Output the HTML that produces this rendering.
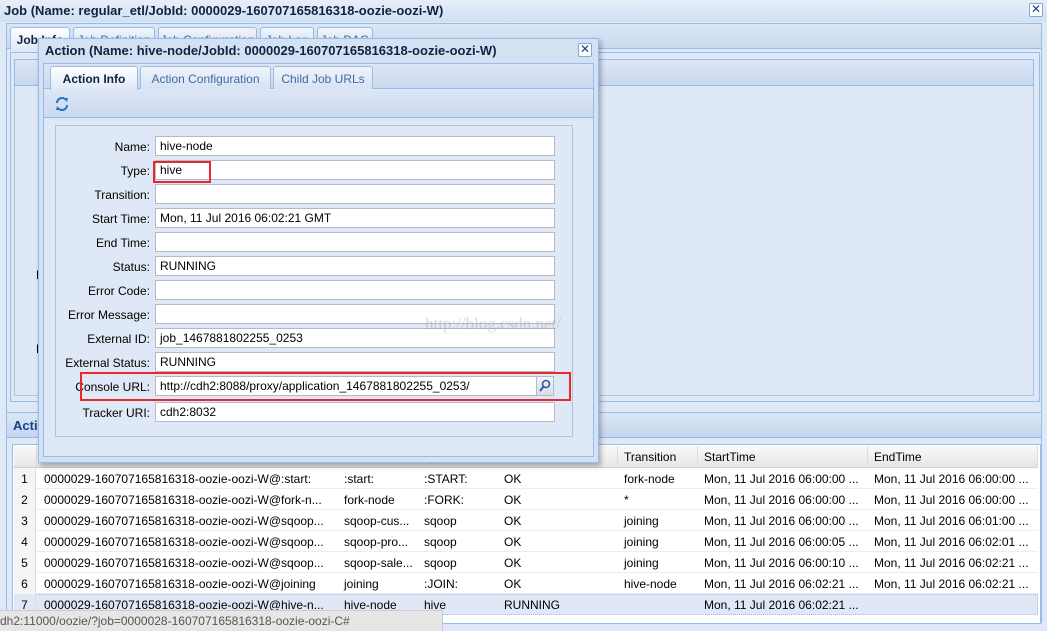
<!DOCTYPE html>
<html><head><meta charset="utf-8"><style>
*{box-sizing:border-box;margin:0;padding:0}
body{width:1047px;height:631px;overflow:hidden;background:#dfe8f6;font-family:"Liberation Sans",sans-serif;font-size:12px;position:relative;color:#000}
.abs{position:absolute}
.title{font-weight:bold;font-size:13px;color:#10223f}
.tab{position:absolute;border:1px solid #99bbe8;border-bottom:none;background:linear-gradient(#f0f4fb,#d6e2f3);color:#416aa3;font-size:12px;text-align:center;padding-top:5px;border-radius:3px 3px 0 0}
.tab.on{background:linear-gradient(#fff,#dfe8f6);color:#10223f;font-weight:bold}
.lbl{position:absolute;width:110px;text-align:right;left:40px;font-size:12px}
.inp{position:absolute;left:155px;width:400px;height:20px;background:#fff;border:1px solid #b5b8c8;padding:2px 4px;font-size:12px}
.row{position:absolute;left:14px;width:1024px;height:21px;border-bottom:1px solid #ededed;background:#fff}
.row span{position:absolute;top:4px;white-space:nowrap}
.rn{position:absolute;left:0;width:22px;height:21px;background:#f5f5f5;text-align:center;padding-top:4px;border-right:1px solid #ddd}
.hd{position:absolute;top:0;height:22px;border-right:1px solid #ddd;padding:4px 6px;color:#000}
</style></head><body>
<div class="abs" style="left:0;top:0;width:1047px;height:22px;background:linear-gradient(#e8eef9,#d2e0f3)"></div>
<div class="abs title" style="left:4px;top:3px">Job (Name: regular_etl/JobId: 0000029-160707165816318-oozie-oozi-W)</div>
<div class="abs" style="left:1029px;top:3px;width:14px;height:14px;border:1px solid #8aa6d2;border-radius:2px;background:#fff;color:#15428b;font-size:12px;line-height:11px;text-align:center">✕</div>
<div class="abs" style="left:6px;top:23px;width:1036px;height:600px;border:1px solid #99bbe8;background:#dfe8f6"></div>
<div class="abs" style="left:7px;top:24px;width:1034px;height:25px;background:linear-gradient(#dce6f5,#cbdaf0);border-bottom:1px solid #99bbe8"></div>
<div class="tab on" style="left:10px;top:27px;width:60px;height:23px">Job Info</div>
<div class="tab" style="left:73px;top:27px;width:82px;height:22px">Job Definition</div>
<div class="tab" style="left:158px;top:27px;width:99px;height:22px">Job Configuration</div>
<div class="tab" style="left:260px;top:27px;width:54px;height:22px">Job Log</div>
<div class="tab" style="left:317px;top:27px;width:56px;height:22px">Job DAG</div>
<div class="abs" style="left:10px;top:52px;width:1030px;height:350px;border:1px solid #99bbe8;background:#dfe8f6"></div>
<div class="abs" style="left:14px;top:59px;width:1020px;height:27px;border:1px solid #99bbe8;background:linear-gradient(#dce6f5,#c9d8ee)"></div>
<div class="abs" style="left:14px;top:86px;width:1020px;height:310px;border:1px solid #b5c3d8;border-top:none"></div>
<div class="abs" style="left:36px;top:268px;color:#000">P</div>
<div class="abs" style="left:36px;top:342px;color:#000">L</div>
<div class="abs" style="left:7px;top:412px;width:1034px;height:26px;background:linear-gradient(#dce6f5,#c5d6ee);border-top:1px solid #99bbe8;border-bottom:1px solid #99bbe8"></div>
<div class="abs title" style="left:13px;top:418px;font-size:13px;color:#15428b">Actions</div>
<div class="abs" style="left:12px;top:444px;width:1029px;height:180px;background:#fff;border:1px solid #99bbe8"></div>
<div class="abs" style="left:14px;top:446px;width:1024px;height:22px;background:linear-gradient(#f9f9f9,#e6e6e6);border-bottom:1px solid #d0d0d0;color:#000">
<div class="hd" style="left:0;width:23px"></div>
<div class="hd" style="left:24px;width:300px;color:#999">Action Id</div>
<div class="hd" style="left:324px;width:80px;color:#999">Name</div>
<div class="hd" style="left:404px;width:80px;color:#999">Type</div>
<div class="hd" style="left:484px;width:120px;color:#999">Status</div>
<div class="hd" style="left:604px;width:80px">Transition</div>
<div class="hd" style="left:684px;width:170px">StartTime</div>
<div class="hd" style="left:854px;width:170px">EndTime</div>
</div>
<div class="row" style="top:468px"><div class="rn">1</div><span style="left:30px">0000029-160707165816318-oozie-oozi-W@:start:</span><span style="left:330px">:start:</span><span style="left:410px">:START:</span><span style="left:490px">OK</span><span style="left:610px">fork-node</span><span style="left:690px">Mon, 11 Jul 2016 06:00:00 ...</span><span style="left:860px">Mon, 11 Jul 2016 06:00:00 ...</span></div>
<div class="row" style="top:489px"><div class="rn">2</div><span style="left:30px">0000029-160707165816318-oozie-oozi-W@fork-n...</span><span style="left:330px">fork-node</span><span style="left:410px">:FORK:</span><span style="left:490px">OK</span><span style="left:610px">*</span><span style="left:690px">Mon, 11 Jul 2016 06:00:00 ...</span><span style="left:860px">Mon, 11 Jul 2016 06:00:00 ...</span></div>
<div class="row" style="top:510px"><div class="rn">3</div><span style="left:30px">0000029-160707165816318-oozie-oozi-W@sqoop...</span><span style="left:330px">sqoop-cus...</span><span style="left:410px">sqoop</span><span style="left:490px">OK</span><span style="left:610px">joining</span><span style="left:690px">Mon, 11 Jul 2016 06:00:00 ...</span><span style="left:860px">Mon, 11 Jul 2016 06:01:00 ...</span></div>
<div class="row" style="top:531px"><div class="rn">4</div><span style="left:30px">0000029-160707165816318-oozie-oozi-W@sqoop...</span><span style="left:330px">sqoop-pro...</span><span style="left:410px">sqoop</span><span style="left:490px">OK</span><span style="left:610px">joining</span><span style="left:690px">Mon, 11 Jul 2016 06:00:05 ...</span><span style="left:860px">Mon, 11 Jul 2016 06:02:01 ...</span></div>
<div class="row" style="top:552px"><div class="rn">5</div><span style="left:30px">0000029-160707165816318-oozie-oozi-W@sqoop...</span><span style="left:330px">sqoop-sale...</span><span style="left:410px">sqoop</span><span style="left:490px">OK</span><span style="left:610px">joining</span><span style="left:690px">Mon, 11 Jul 2016 06:00:10 ...</span><span style="left:860px">Mon, 11 Jul 2016 06:02:21 ...</span></div>
<div class="row" style="top:573px"><div class="rn">6</div><span style="left:30px">0000029-160707165816318-oozie-oozi-W@joining</span><span style="left:330px">joining</span><span style="left:410px">:JOIN:</span><span style="left:490px">OK</span><span style="left:610px">hive-node</span><span style="left:690px">Mon, 11 Jul 2016 06:02:21 ...</span><span style="left:860px">Mon, 11 Jul 2016 06:02:21 ...</span></div>
<div class="row" style="top:594px;background:#dfe8f6;outline:1px dotted #a3bae9;outline-offset:-1px"><div class="rn" style="background:#dfe8f6">7</div><span style="left:30px">0000029-160707165816318-oozie-oozi-W@hive-n...</span><span style="left:330px">hive-node</span><span style="left:410px">hive</span><span style="left:490px">RUNNING</span><span style="left:690px">Mon, 11 Jul 2016 06:02:21 ...</span></div>
<div class="abs" style="left:0;top:610px;width:443px;height:21px;background:#e6e6e6;border-top:1px solid #ccc;border-right:1px solid #ccc;color:#555;padding:3px 0 0 0;white-space:nowrap;overflow:hidden">dh2:11000/oozie/?job=0000028-160707165816318-oozie-oozi-C#</div>
<div class="abs" style="left:38px;top:38px;width:561px;height:425px;background:#d3e1f3;border:1px solid #99bbe8;box-shadow:2px 3px 5px rgba(0,0,0,.3)"></div>
<div class="abs title" style="left:45px;top:43px">Action (Name: hive-node/JobId: 0000029-160707165816318-oozie-oozi-W)</div>
<div class="abs" style="left:578px;top:43px;width:14px;height:14px;border:1px solid #8aa6d2;border-radius:2px;background:#fff;color:#15428b;font-size:12px;line-height:11px;text-align:center">✕</div>
<div class="abs" style="left:43px;top:63px;width:551px;height:394px;border:1px solid #99bbe8;background:#dfe8f6"></div>
<div class="abs" style="left:44px;top:64px;width:549px;height:25px;background:linear-gradient(#dce6f5,#cbdaf0);border-bottom:1px solid #99bbe8"></div>
<div class="tab on" style="left:50px;top:66px;width:88px;height:24px">Action Info</div>
<div class="tab" style="left:140px;top:66px;width:131px;height:23px">Action Configuration</div>
<div class="tab" style="left:273px;top:66px;width:100px;height:23px">Child Job URLs</div>
<div class="abs" style="left:44px;top:90px;width:549px;height:28px;background:linear-gradient(#dce6f5,#cbdaf0);border-bottom:1px solid #99bbe8"></div>
<svg class="abs" style="left:54px;top:96px" width="16" height="16" viewBox="0 0 16 16"><path d="M3 7a5 5 0 0 1 9-3" fill="none" stroke="#2a6fc9" stroke-width="2"/><path d="M13 9a5 5 0 0 1-9 3" fill="none" stroke="#2a6fc9" stroke-width="2"/><path d="M10 2l4 0-1 4z M6 14l-4 0 1-4z" fill="#2a6fc9"/></svg>
<div class="abs" style="left:55px;top:125px;width:518px;height:312px;border:1px solid #b5c3d8;background:#dfe8f6"></div>
<div class="lbl" style="top:140px">Name:</div><div class="inp" style="top:136px">hive-node</div>
<div class="lbl" style="top:164px">Type:</div><div class="inp" style="top:160px">hive</div>
<div class="lbl" style="top:188px">Transition:</div><div class="inp" style="top:184px"></div>
<div class="lbl" style="top:212px">Start Time:</div><div class="inp" style="top:208px">Mon, 11 Jul 2016 06:02:21 GMT</div>
<div class="lbl" style="top:236px">End Time:</div><div class="inp" style="top:232px"></div>
<div class="lbl" style="top:260px">Status:</div><div class="inp" style="top:256px">RUNNING</div>
<div class="lbl" style="top:284px">Error Code:</div><div class="inp" style="top:280px"></div>
<div class="lbl" style="top:308px">Error Message:</div><div class="inp" style="top:304px"></div>
<div class="lbl" style="top:332px">External ID:</div><div class="inp" style="top:328px">job_1467881802255_0253</div>
<div class="lbl" style="top:356px">External Status:</div><div class="inp" style="top:352px">RUNNING</div>
<div class="lbl" style="top:380px">Console URL:</div><div class="inp" style="top:376px;width:382px">http://cdh2:8088/proxy/application_1467881802255_0253/</div>
<div class="abs" style="left:536px;top:376px;width:18px;height:20px;border:1px solid #b5b8c8;background:linear-gradient(#f4f4f4,#d8dde6)"><svg width="16" height="18" viewBox="0 0 16 18"><circle cx="9" cy="7" r="3.5" fill="none" stroke="#2a5caa" stroke-width="1.6"/><path d="M6.5 9.5L3 14" stroke="#2a5caa" stroke-width="2"/></svg></div>
<div class="lbl" style="top:406px">Tracker URI:</div><div class="inp" style="top:402px">cdh2:8032</div>
<div class="abs" style="left:153px;top:161px;width:58px;height:22px;border:2px solid #e8282d"></div>
<div class="abs" style="left:80px;top:372px;width:491px;height:29px;border:2px solid #e8282d"></div>
<div class="abs" style="left:425px;top:314px;font-family:'Liberation Serif',serif;font-size:17px;color:rgba(150,150,150,.35)">http://blog.csdn.net/</div>
</body></html>
